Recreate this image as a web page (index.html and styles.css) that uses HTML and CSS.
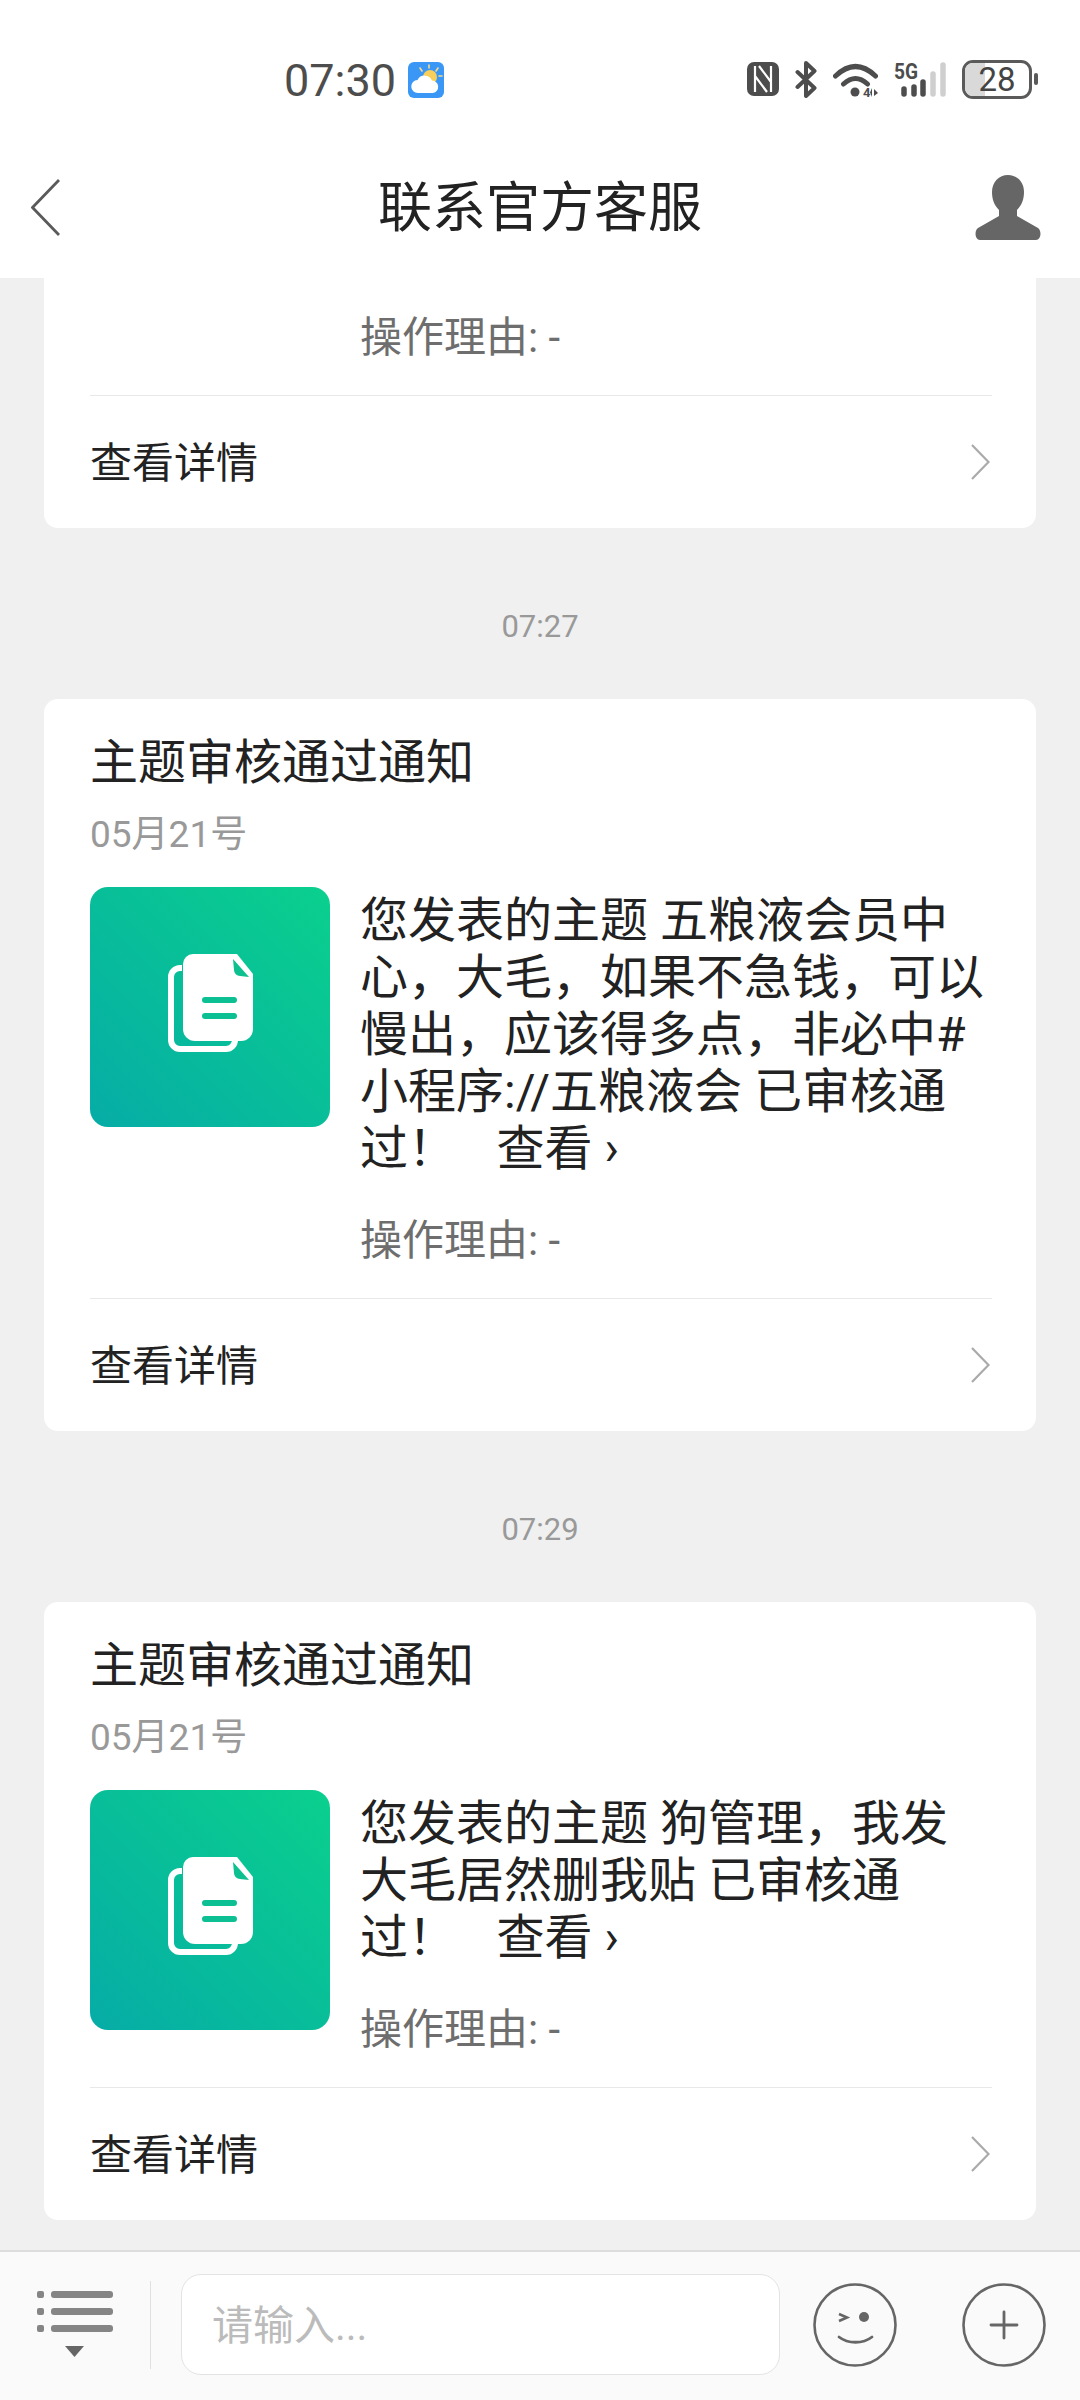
FILE: index.html
```html
<!DOCTYPE html>
<html lang="zh-CN">
<head>
    <meta charset="UTF-8">
    <meta name="viewport" content="width=device-width, initial-scale=1.0">
    <title>联系官方客服</title>
    <link rel="stylesheet" href="styles.css">
</head>
<body>
<div class="page">
    <header class="header">
        <div class="status">
            <span class="clock">07:30</span>
            <svg class="weather" viewBox="0 0 36 36">
                <rect width="36" height="36" rx="6" fill="#3a97f5"/>
                <circle cx="22" cy="15" r="7" fill="#f8cf5a"/>
                <path d="M12 6l2 3M21 3v3M30 6l-2 3M34 14h-3" stroke="#f8dc8c" stroke-width="1.6" stroke-linecap="round"/>
                <path d="M10 31a6.500 6.500 0 0 1-.5-13a8 8 0 0 1 14.500.500a6.300 6.300 0 0 1 1 12.500z" fill="#fff"/>
            </svg>
            <div class="status-icons">
                <svg class="ic-nfc" viewBox="0 0 32 34">
                    <rect width="32" height="34" rx="7" fill="#4d4d4d"/>
                    <path d="M8 4v26M24 4v26M12 4l12 16M8 14l12 16" fill="none" stroke="#fff" stroke-width="2.200"/>
                </svg>
                <svg class="ic-bt" viewBox="0 0 22 37">
                    <path d="M2.500 11L19.500 27 11 35V2l8.500 8L2.500 26" fill="none" stroke="#4d4d4d" stroke-width="4" stroke-linejoin="round" stroke-linecap="round"/>
                </svg>
                <svg class="ic-wifi" viewBox="0 0 45 39">
                    <path d="M2.500 14Q22.500-5 42.500 14M10.500 22Q22.500 11 34.500 22" fill="none" stroke="#4d4d4d" stroke-width="5" stroke-linecap="round"/>
                    <circle cx="22" cy="30" r="4.500" fill="#4d4d4d"/>
                    <text x="30" y="35" class="wifi-text">4</text>
                    <path d="M39 26v9l-2-4.500zM41 27l4 4-4 3z" fill="#4d4d4d"/>
                </svg>
                <svg class="ic-signal" viewBox="0 -4 53 39">
                    <text x="0" y="17" class="signal-text" textLength="24" lengthAdjust="spacingAndGlyphs">5G</text>
                    <g stroke-width="5.500" stroke-linecap="round">
                        <path d="M10 27v5M20 25v7M29 20v12" stroke="#4d4d4d"/>
                        <path d="M39 12v20M49 3v29" stroke="#cfcfcf"/>
                    </g>
                </svg>
                <div class="battery">
                    <div class="battery-body">
                        <div class="battery-level"></div>
                        <span class="battery-num">28</span>
                    </div>
                    <div class="battery-nub"></div>
                </div>
            </div>
        </div>
        <nav class="nav">
            <div class="nav-side">
                <svg class="ic-back" viewBox="0 0 29 57">
                    <path d="M28 1L1.500 28.500 28 56" fill="none" stroke="#5a5a5a" stroke-width="2.800"/>
                </svg>
            </div>
            <div class="nav-title">联系官方客服</div>
            <div class="nav-side nav-side-right">
                <svg class="ic-user" viewBox="0 0 66 65">
                    <path d="M33 0c9 0 16 7 16 17 0 7-2 13-7 18v6l21 12c4 3 3 12-2 12H5c-5 0-6-9-2-12l21-12v-6c-5-5-7-11-7-18C17 7 24 0 33 0z" fill="#666"/>
                </svg>
            </div>
        </nav>
    </header>

    <main class="chat">
        <section class="card card-cut">
            <div class="reason reason-only">操作理由: -</div>
            <div class="detail">
                <span class="detail-text">查看详情</span>
                <svg class="ic-more" viewBox="0 0 19 36"><path d="M1 1l16.500 17L1 35" fill="none" stroke="#aaa" stroke-width="2.200"/></svg>
            </div>
        </section>

        <div class="time">07:27</div>

        <section class="card">
            <div class="card-title">主题审核通过通知</div>
            <div class="card-date">05月21号</div>
            <div class="card-body">
                <div class="thumb">
                    <svg class="ic-doc" viewBox="0 0 240 240">
                        <path d="M92 81H90a9 9 0 0 0-9 9v63a9 9 0 0 0 9 9h46a9 9 0 0 0 9-9v-1" fill="none" stroke="#fff" stroke-width="6"/>
                        <path d="M103 67h44l16 20v55a12 12 0 0 1-12 12h-46a12 12 0 0 1-12-12V77a10 10 0 0 1 10-10z" fill="#fff"/>
                        <path d="M143 72l1 11a6 6 0 0 0 6 6l9 1z" fill="#0cc08f"/>
                        <path d="M115 113h29M115 129h29" stroke="#0cc093" stroke-width="6" stroke-linecap="round"/>
                    </svg>
                </div>
                <div class="msg">
                    <div class="msg-text">您发表的主题 五粮液会员中心，大毛，如果不急钱，可以慢出，应该得多点，非必中#小程序://五粮液会 已审核通过！&nbsp;&nbsp;&nbsp;&#8202;查看 ›</div>
                    <div class="reason">操作理由: -</div>
                </div>
            </div>
            <div class="detail">
                <span class="detail-text">查看详情</span>
                <svg class="ic-more" viewBox="0 0 19 36"><path d="M1 1l16.500 17L1 35" fill="none" stroke="#aaa" stroke-width="2.200"/></svg>
            </div>
        </section>

        <div class="time">07:29</div>

        <section class="card">
            <div class="card-title">主题审核通过通知</div>
            <div class="card-date">05月21号</div>
            <div class="card-body">
                <div class="thumb">
                    <svg class="ic-doc" viewBox="0 0 240 240">
                        <path d="M92 81H90a9 9 0 0 0-9 9v63a9 9 0 0 0 9 9h46a9 9 0 0 0 9-9v-1" fill="none" stroke="#fff" stroke-width="6"/>
                        <path d="M103 67h44l16 20v55a12 12 0 0 1-12 12h-46a12 12 0 0 1-12-12V77a10 10 0 0 1 10-10z" fill="#fff"/>
                        <path d="M143 72l1 11a6 6 0 0 0 6 6l9 1z" fill="#0cc08f"/>
                        <path d="M115 113h29M115 129h29" stroke="#0cc093" stroke-width="6" stroke-linecap="round"/>
                    </svg>
                </div>
                <div class="msg">
                    <div class="msg-text">您发表的主题 狗管理，我发大毛居然删我贴 已审核通过！&nbsp;&nbsp;&nbsp;&#8202;查看 ›</div>
                    <div class="reason">操作理由: -</div>
                </div>
            </div>
            <div class="detail">
                <span class="detail-text">查看详情</span>
                <svg class="ic-more" viewBox="0 0 19 36"><path d="M1 1l16.500 17L1 35" fill="none" stroke="#aaa" stroke-width="2.200"/></svg>
            </div>
        </section>
    </main>

    <footer class="footer">
        <svg class="ic-menu" viewBox="0 0 76 68">
            <g fill="#858585">
                <rect x="0" y="0" width="7" height="7" rx="2"/>
                <rect x="14" y="0" width="62" height="7" rx="3"/>
                <rect x="0" y="17" width="7" height="7" rx="2"/>
                <rect x="14" y="17" width="62" height="7" rx="3"/>
                <rect x="0" y="34" width="7" height="7" rx="2"/>
                <rect x="14" y="34" width="62" height="7" rx="3"/>
            </g>
            <path d="M28 55h19l-9.500 11z" fill="#666"/>
        </svg>
        <div class="footer-line"></div>
        <div class="input">请输入...</div>
        <svg class="ic-smile" viewBox="0 0 84 84">
            <circle cx="42" cy="42" r="40.500" fill="none" stroke="#666" stroke-width="2.600"/>
            <path d="M26 31l8 3.500-8 3.500" fill="none" stroke="#666" stroke-width="2.600"/>
            <circle cx="51" cy="34" r="5" fill="#666"/>
            <path d="M26 54c9 7 24 7 33 0" fill="none" stroke="#666" stroke-width="2.800" stroke-linecap="round"/>
        </svg>
        <svg class="ic-plus" viewBox="0 0 84 84">
            <circle cx="42" cy="42" r="40.500" fill="none" stroke="#666" stroke-width="2.600"/>
            <path d="M29 42h26M42 29v26" fill="none" stroke="#666" stroke-width="2.800" stroke-linecap="round"/>
        </svg>
    </footer>
</div>
</body>
</html>
```

FILE: styles.css
```css
* {
    box-sizing: border-box;
}
body {
    margin: 0;
    font-family: Roboto, "Noto Sans CJK SC", sans-serif;
    background-color: #f0f0f0;
    color: #222;
}
svg {
    display: block;
    flex-shrink: 0;
}
.page {
    display: flex;
    flex-direction: column;
    height: 2400px;
    overflow: hidden;
}

/* top */
.header {
    background-color: #fff;
    padding: 10px 0 14px;
}
.status {
    display: flex;
    align-items: center;
    height: 140px;
    padding: 0 42px 0 284px;
    color: #4d4d4d;
}
.clock {
    font-size: 45px;
}
.weather {
    width: 36px;
    height: 36px;
    margin-left: 12px;
}
.status-icons {
    display: flex;
    align-items: center;
    gap: 16px;
    margin-left: auto;
    padding-bottom: 2px;
}
.ic-nfc {
    width: 32px;
    height: 34px;
}
.ic-bt {
    width: 22px;
    height: 37px;
}
.ic-wifi {
    width: 45px;
    height: 39px;
    margin-bottom: -4px;
}
.wifi-text {
    font-size: 13px;
    font-weight: 700;
    fill: #4d4d4d;
}
.ic-signal {
    width: 53px;
    height: 39px;
    margin-top: -4px;
}
.signal-text {
    font-size: 22px;
    font-weight: 700;
    fill: #4d4d4d;
}
.battery {
    display: flex;
    align-items: center;
    gap: 2px;
    margin-left: -1px;
}
.battery-body {
    position: relative;
    display: flex;
    align-items: center;
    justify-content: center;
    width: 70px;
    height: 39px;
    border: 3px solid #5a5a5a;
    border-radius: 11px;
    overflow: hidden;
}
.battery-level {
    position: absolute;
    left: 0;
    top: 0;
    bottom: 0;
    width: 32%;
    background-color: #d9d9d9;
}
.battery-num {
    position: relative;
    font-size: 33px;
    line-height: 33px;
    color: #444;
}
.battery-nub {
    width: 4px;
    height: 12px;
    border-radius: 2px;
    background-color: #5a5a5a;
}
.nav {
    display: flex;
    align-items: center;
    height: 114px;
}
.nav-side {
    width: 140px;
    padding-left: 31px;
}
.nav-side-right {
    display: flex;
    justify-content: flex-end;
    padding: 0 39px 0 0;
}
.nav-title {
    flex: 1;
    padding-top: 4px;
    font-size: 54px;
    line-height: 70px;
    text-align: center;
}
.ic-back {
    width: 29px;
    height: 57px;
}
.ic-user {
    width: 66px;
    height: 65px;
}

/* messages */
.chat {
    flex: 1;
    padding: 0 44px;
    overflow: hidden;
}
.card {
    background-color: #fff;
    border-radius: 14px;
    padding: 34px 44px 0 46px;
}
.card-cut {
    border-radius: 0 0 14px 14px;
    padding-top: 31px;
}
.card-title {
    font-size: 48px;
    line-height: 60px;
}
.card-date {
    margin-top: 20px;
    font-size: 37px;
    line-height: 44px;
    color: #999;
}
.card-body {
    display: flex;
    gap: 30px;
    margin-top: 30px;
    padding-bottom: 29px;
}
.thumb {
    display: flex;
    flex-shrink: 0;
    width: 240px;
    height: 240px;
    border-radius: 18px;
    background: linear-gradient(45deg, #06aca6, #0ad08d);
}
.ic-doc {
    width: 240px;
    height: 240px;
}
.msg {
    flex: 1;
    padding-top: 5px;
}
.msg-text {
    font-size: 48px;
    line-height: 57px;
    color: #222;
}
.reason {
    margin-top: 35px;
    font-size: 42px;
    line-height: 57px;
    color: #6e6e6e;
}
.reason-only {
    margin: 0 0 29px 270px;
}
.detail {
    display: flex;
    align-items: center;
    justify-content: space-between;
    height: 133px;
    padding-right: 2px;
    border-top: 1px solid #e8e8e8;
    font-size: 42px;
    color: #222;
}
.detail-text {
    margin-bottom: 6px;
}
.ic-more {
    width: 19px;
    height: 36px;
}
.time {
    padding: 81px 0 54px;
    font-size: 31px;
    line-height: 36px;
    text-align: center;
    color: #999;
}

/* bottom */
.footer {
    display: flex;
    align-items: center;
    height: 150px;
    padding: 0 0 3px 37px;
    background-color: #fafafa;
    border-top: 2px solid #ddd;
}
.ic-menu {
    width: 76px;
    height: 68px;
}
.footer-line {
    width: 1px;
    height: 88px;
    margin-left: 37px;
    background-color: #e0e0e0;
}
.input {
    display: flex;
    align-items: center;
    width: 599px;
    height: 101px;
    margin-left: 30px;
    padding: 0 0 5px 30px;
    background-color: #fff;
    border: 1px solid #e3e3e3;
    border-radius: 20px;
    font-size: 41px;
    color: #bbb;
}
.ic-smile {
    width: 84px;
    height: 84px;
    margin-left: 33px;
}
.ic-plus {
    width: 84px;
    height: 84px;
    margin-left: 65px;
}
```
